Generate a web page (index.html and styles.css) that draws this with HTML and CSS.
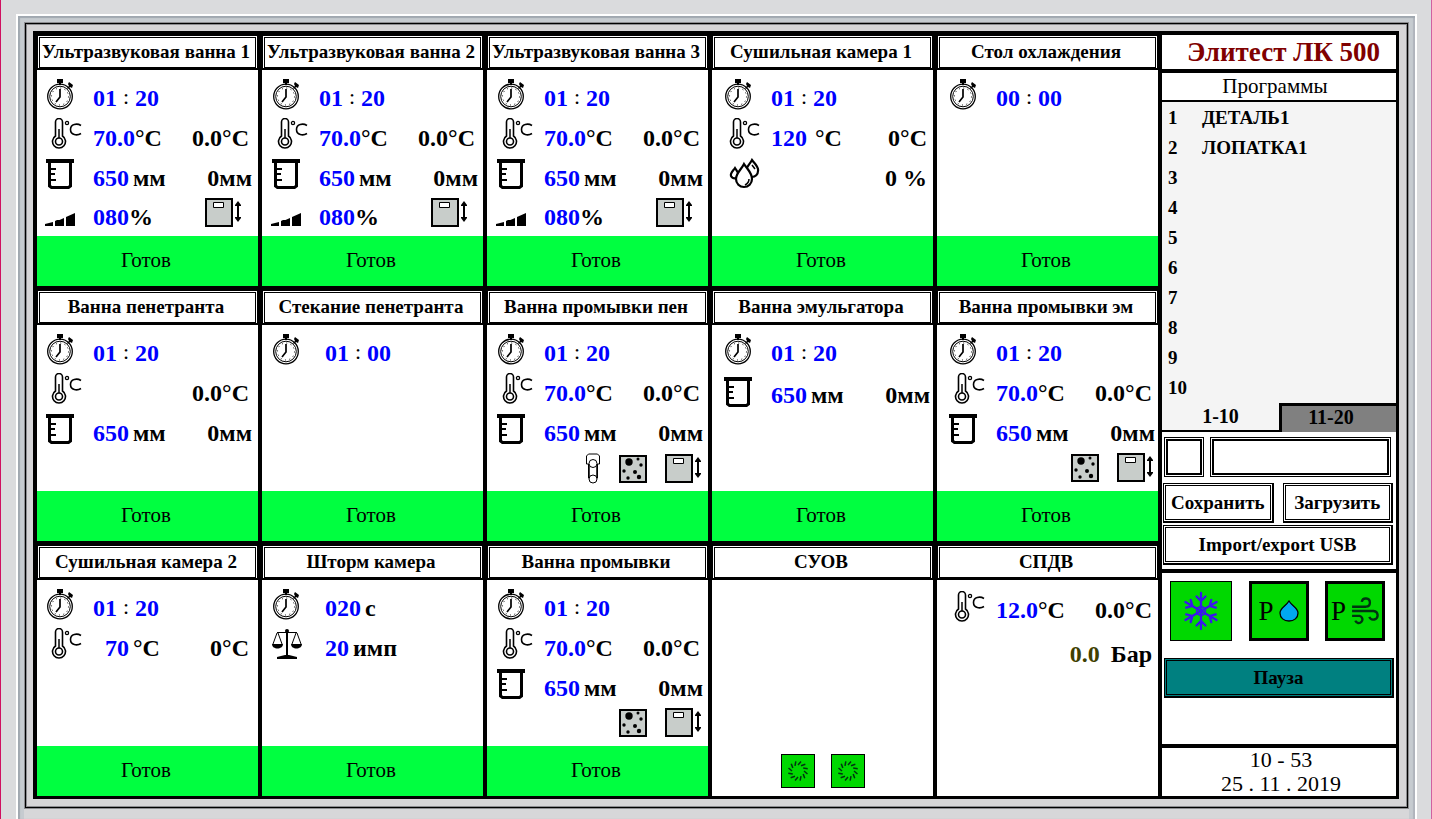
FILE: index.html
```html
<!DOCTYPE html>
<html lang="ru">
<head>
    <meta charset="UTF-8">
    <meta name="viewport" content="width=device-width, initial-scale=1.0">
    <title>Элитест ЛК 500</title>
    <link rel="stylesheet" href="styles.css">
</head>
<body>

<!-- icons -->
<svg class="sprite" aria-hidden="true">
    <symbol id="clock" viewBox="0 0 40 34">
        <circle cx="15" cy="18.500" r="12.300" fill="#fff" stroke="#000" stroke-width="1.300"/>
        <circle cx="15" cy="18.500" r="10.300" fill="none" stroke="#000"/>
        <circle cx="15" cy="18.500" r="8.500" fill="none" stroke="#000" stroke-dasharray="1 3.450"/>
        <path d="M12 1h6v4h-2v2h-2V5h-2zM23 6l1-2 4 3-1 3-2-1-2 2-1-1 2-2z" fill="#000"/>
        <path d="M15 11v8l-4 5" fill="none" stroke="#000" stroke-width="1.700"/>
    </symbol>
    <symbol id="thermo" viewBox="0 0 40 34">
        <path d="M10.500 18V4a3.500 3.500 0 0 1 7 0v14a6.500 6.500 0 1 1-7 0z" fill="#fff" stroke="#000" stroke-width="1.600"/>
        <circle cx="14" cy="23.500" r="3.500" fill="#fff" stroke="#000" stroke-width="1.600"/>
        <path d="M14 11v9" stroke="#000" stroke-width="1.500"/>
        <circle cx="22" cy="5" r="1.600" fill="none" stroke="#000" stroke-width="1.300"/>
        <path d="M36 7.500C32 5 25.500 6 25.500 11.500S32 18 36 15.500" fill="none" stroke="#000" stroke-width="1.600"/>
    </symbol>
    <symbol id="beaker" viewBox="0 0 40 34">
        <path d="M1 1h28v4H1z" fill="#000"/>
        <path d="M4.500 4v24l2 1.500h17l2-1.500V4" fill="none" stroke="#000" stroke-width="3"/>
        <path d="M5 11h6M5 16h5M5 22h6" stroke="#000" stroke-width="2"/>
    </symbol>
    <symbol id="power" viewBox="0 0 40 34">
        <path d="M0 28v-2l8-2v4zM10 28v-5l2-1h6v6zM10 24l9-4v8h-9zM21 28v-9l9-4v13z" fill="#000"/>
    </symbol>
    <symbol id="drops" viewBox="0 0 40 34">
        <g fill="#fff" stroke="#000" stroke-width="2.200">
            <path d="M29 2c3 4 7 7 6 11a6 6 0 0 1-12 0c0-4 4-7 6-11z"/>
            <path d="M12 10c2 3 4 5 4 8a4.500 4.500 0 0 1-8 0c-1-3 2-5 4-8z"/>
            <path d="M21 6c4 6 8 9 8 15a8 8 0 0 1-16 0c0-6 5-9 8-15z"/>
        </g>
        <path d="M26 21c0 3-2 5-4 6M29 7l3 4" fill="none" stroke="#000" stroke-width="1.500"/>
    </symbol>
    <symbol id="scales" viewBox="0 0 40 34">
        <path d="M15 3h2v25h-2z"/>
        <circle cx="16" cy="3" r="2"/>
        <path d="M6 4.500h20M6 5L2 16M7 5l4 11M25 5l-4 11M26 5l4 11" fill="none" stroke="#000"/>
        <path d="M1 16h11c0 6-11 6-11 0zM20 16h11c0 6-11 6-11 0zM6 31v-2l8-2h4l8 2v2z"/>
    </symbol>
    <symbol id="lid" viewBox="0 0 38 30">
        <path d="M1 1h26v27H1z" fill="#c8cdca" stroke="#000" stroke-width="2"/>
        <path d="M8.500 4.500h10v5h-10z" fill="#fff" stroke="#000"/>
        <path d="M30 7l3-4 3 4v1h-2v11h2v1l-3 4-3-4v-1h2V8h-2z"/>
    </symbol>
    <symbol id="bubbles" viewBox="0 0 28 30">
        <path d="M1 2h26v26H1z" fill="#c8cdca" stroke="#000" stroke-width="2"/>
        <circle cx="10" cy="8" r="3.700"/>
        <circle cx="19" cy="5" r="1.500"/><circle cx="22" cy="11" r="1.700"/>
        <circle cx="5" cy="17" r="1.700"/><circle cx="16" cy="18" r="2"/>
        <circle cx="9" cy="24" r="1.700"/><circle cx="20" cy="23" r="2.200"/>
    </symbol>
    <symbol id="valve" viewBox="0 0 16 32">
        <path d="M1.500 11V3l2-2h9l2 2v8h-2v14h-9V11z" fill="#fff" stroke="#000"/>
        <path d="M4 11v13M12 11v13" stroke="#000" stroke-width="1.500"/>
        <circle cx="8" cy="10.500" r="4" fill="#fff" stroke="#000"/>
        <circle cx="8" cy="26" r="4" fill="#fff" stroke="#000"/>
    </symbol>
    <symbol id="fan" viewBox="0 0 32 32">
        <g stroke="#031" stroke-width="1.500" fill="none">
            <path d="M16 10l3-3.500M16 22l-3 3.500M10 16l-3.500-3M22 16l3.500 3"/>
            <path d="M16 10l3-3.500M16 22l-3 3.500M10 16l-3.500-3M22 16l3.500 3" transform="rotate(30 16 16)"/>
            <path d="M16 10l3-3.500M16 22l-3 3.500M10 16l-3.500-3M22 16l3.500 3" transform="rotate(60 16 16)"/>
        </g>
    </symbol>
    <symbol id="snow" viewBox="0 0 40 40">
        <g fill="none" stroke="#3a14ee" stroke-width="2.300" stroke-linecap="round">
            <path id="ray" d="M20 20V2M15.500 5.500L20 10l4.500-4.500"/>
            <use href="#ray" transform="rotate(60 20 20)"/>
            <use href="#ray" transform="rotate(120 20 20)"/>
            <use href="#ray" transform="rotate(180 20 20)"/>
            <use href="#ray" transform="rotate(240 20 20)"/>
            <use href="#ray" transform="rotate(300 20 20)"/>
            <path d="M20 15l4.300 2.500v5L20 25l-4.300-2.500v-5z" stroke-width="1.500"/>
        </g>
    </symbol>
    <symbol id="drop" viewBox="0 0 20 22">
        <path d="M10 1c3 5 9 7 9 12 0 5-4 8-9 8s-9-3-9-8C1 8 7 6 10 1z" fill="#00a8f0" stroke="#000" stroke-width="1.300"/>
    </symbol>
    <symbol id="wind" viewBox="0 0 26 26">
        <path d="M1 9h13a3.800 3.800 0 1 0-4-4.500M1 13h20a4 4 0 1 1-4 5.500M1 17.500h7a3.400 3.400 0 1 1-4 4.500" fill="none" stroke="#031" stroke-width="2.200"/>
    </symbol>
</svg>

<div class="device">
<div class="bezel">
<div class="rim">
<div class="panel">

    <main class="stations">
        <section class="station">
            <h2>Ультразвуковая ванна 1</h2>
            <div class="readings">
                <div class="row"><svg class="icon"><use href="#clock"/></svg><b class="set">01</b><i class="colon">:</i><b class="set">20</b></div>
                <div class="row"><svg class="icon"><use href="#thermo"/></svg><b class="set">70.0</b><b>°C</b><b class="actual temp">0.0°C</b></div>
                <div class="row"><svg class="icon"><use href="#beaker"/></svg><b class="set">650</b><b class="unit">мм</b><b class="actual">0мм</b></div>
                <div class="row last"><svg class="icon"><use href="#power"/></svg><b class="set">080</b><b>%</b>
                    <div class="tools inset"><button aria-label="Крышка"><svg class="lid"><use href="#lid"/></svg></button></div>
                </div>
            </div>
            <div class="status">Готов</div>
        </section>

        <section class="station">
            <h2>Ультразвуковая ванна 2</h2>
            <div class="readings">
                <div class="row"><svg class="icon"><use href="#clock"/></svg><b class="set">01</b><i class="colon">:</i><b class="set">20</b></div>
                <div class="row"><svg class="icon"><use href="#thermo"/></svg><b class="set">70.0</b><b>°C</b><b class="actual temp">0.0°C</b></div>
                <div class="row"><svg class="icon"><use href="#beaker"/></svg><b class="set">650</b><b class="unit">мм</b><b class="actual">0мм</b></div>
                <div class="row last"><svg class="icon"><use href="#power"/></svg><b class="set">080</b><b>%</b>
                    <div class="tools inset"><button aria-label="Крышка"><svg class="lid"><use href="#lid"/></svg></button></div>
                </div>
            </div>
            <div class="status">Готов</div>
        </section>

        <section class="station">
            <h2>Ультразвуковая ванна 3</h2>
            <div class="readings">
                <div class="row"><svg class="icon"><use href="#clock"/></svg><b class="set">01</b><i class="colon">:</i><b class="set">20</b></div>
                <div class="row"><svg class="icon"><use href="#thermo"/></svg><b class="set">70.0</b><b>°C</b><b class="actual temp">0.0°C</b></div>
                <div class="row"><svg class="icon"><use href="#beaker"/></svg><b class="set">650</b><b class="unit">мм</b><b class="actual">0мм</b></div>
                <div class="row last"><svg class="icon"><use href="#power"/></svg><b class="set">080</b><b>%</b>
                    <div class="tools inset"><button aria-label="Крышка"><svg class="lid"><use href="#lid"/></svg></button></div>
                </div>
            </div>
            <div class="status">Готов</div>
        </section>

        <section class="station">
            <h2>Сушильная камера 1</h2>
            <div class="readings">
                <div class="row"><svg class="icon"><use href="#clock"/></svg><b class="set">01</b><i class="colon">:</i><b class="set">20</b></div>
                <div class="row"><svg class="icon"><use href="#thermo"/></svg><b class="set">120</b><b class="unit far">°C</b><b class="actual temp">0°C</b></div>
                <div class="row"><svg class="icon"><use href="#drops"/></svg><b class="actual temp">0 %</b></div>
            </div>
            <div class="status">Готов</div>
        </section>

        <section class="station">
            <h2>Стол охлаждения</h2>
            <div class="readings">
                <div class="row"><svg class="icon"><use href="#clock"/></svg><b class="set">00</b><i class="colon">:</i><b class="set">00</b></div>
            </div>
            <div class="status">Готов</div>
        </section>

        <section class="station">
            <h2>Ванна пенетранта</h2>
            <div class="readings">
                <div class="row"><svg class="icon"><use href="#clock"/></svg><b class="set">01</b><i class="colon">:</i><b class="set">20</b></div>
                <div class="row"><svg class="icon"><use href="#thermo"/></svg><b class="actual temp">0.0°C</b></div>
                <div class="row"><svg class="icon"><use href="#beaker"/></svg><b class="set">650</b><b class="unit">мм</b><b class="actual">0мм</b></div>
            </div>
            <div class="status">Готов</div>
        </section>

        <section class="station">
            <h2>Стекание пенетранта</h2>
            <div class="readings">
                <div class="row indent"><svg class="icon"><use href="#clock"/></svg><b class="set">01</b><i class="colon">:</i><b class="set">00</b></div>
            </div>
            <div class="status">Готов</div>
        </section>

        <section class="station">
            <h2>Ванна промывки пен</h2>
            <div class="readings">
                <div class="row"><svg class="icon"><use href="#clock"/></svg><b class="set">01</b><i class="colon">:</i><b class="set">20</b></div>
                <div class="row"><svg class="icon"><use href="#thermo"/></svg><b class="set">70.0</b><b>°C</b><b class="actual temp">0.0°C</b></div>
                <div class="row"><svg class="icon"><use href="#beaker"/></svg><b class="set">650</b><b class="unit">мм</b><b class="actual">0мм</b></div>
                <div class="row last">
                    <div class="tools">
                        <button aria-label="Клапан"><svg class="valve"><use href="#valve"/></svg></button>
                        <button aria-label="Барботаж"><svg class="bubbles"><use href="#bubbles"/></svg></button>
                        <button aria-label="Крышка"><svg class="lid"><use href="#lid"/></svg></button>
                    </div>
                </div>
            </div>
            <div class="status">Готов</div>
        </section>

        <section class="station">
            <h2>Ванна эмульгатора</h2>
            <div class="readings">
                <div class="row"><svg class="icon"><use href="#clock"/></svg><b class="set">01</b><i class="colon">:</i><b class="set">20</b></div>
                <div class="row tall"><svg class="icon"><use href="#beaker"/></svg><b class="set">650</b><b class="unit">мм</b><b class="actual">0мм</b></div>
            </div>
            <div class="status">Готов</div>
        </section>

        <section class="station">
            <h2>Ванна промывки эм</h2>
            <div class="readings">
                <div class="row"><svg class="icon"><use href="#clock"/></svg><b class="set">01</b><i class="colon">:</i><b class="set">20</b></div>
                <div class="row"><svg class="icon"><use href="#thermo"/></svg><b class="set">70.0</b><b>°C</b><b class="actual temp">0.0°C</b></div>
                <div class="row"><svg class="icon"><use href="#beaker"/></svg><b class="set">650</b><b class="unit">мм</b><b class="actual">0мм</b></div>
                <div class="row last">
                    <div class="tools">
                        <button aria-label="Барботаж"><svg class="bubbles"><use href="#bubbles"/></svg></button>
                        <button aria-label="Крышка"><svg class="lid"><use href="#lid"/></svg></button>
                    </div>
                </div>
            </div>
            <div class="status">Готов</div>
        </section>

        <section class="station">
            <h2>Сушильная камера 2</h2>
            <div class="readings">
                <div class="row"><svg class="icon"><use href="#clock"/></svg><b class="set">01</b><i class="colon">:</i><b class="set">20</b></div>
                <div class="row"><svg class="icon"><use href="#thermo"/></svg><b class="set short">70</b><b class="unit">°C</b><b class="actual temp">0°C</b></div>
            </div>
            <div class="status">Готов</div>
        </section>

        <section class="station">
            <h2>Шторм камера</h2>
            <div class="readings">
                <div class="row indent"><svg class="icon"><use href="#clock"/></svg><b class="set">020</b><b class="unit">с</b></div>
                <div class="row indent"><svg class="icon"><use href="#scales"/></svg><b class="set">20</b><b class="unit">имп</b></div>
            </div>
            <div class="status">Готов</div>
        </section>

        <section class="station">
            <h2>Ванна промывки</h2>
            <div class="readings">
                <div class="row"><svg class="icon"><use href="#clock"/></svg><b class="set">01</b><i class="colon">:</i><b class="set">20</b></div>
                <div class="row"><svg class="icon"><use href="#thermo"/></svg><b class="set">70.0</b><b>°C</b><b class="actual temp">0.0°C</b></div>
                <div class="row"><svg class="icon"><use href="#beaker"/></svg><b class="set">650</b><b class="unit">мм</b><b class="actual">0мм</b></div>
                <div class="row last">
                    <div class="tools">
                        <button aria-label="Барботаж"><svg class="bubbles"><use href="#bubbles"/></svg></button>
                        <button aria-label="Крышка"><svg class="lid"><use href="#lid"/></svg></button>
                    </div>
                </div>
            </div>
            <div class="status">Готов</div>
        </section>

        <section class="station">
            <h2>СУОВ</h2>
            <div class="fans">
                <button class="fan" aria-label="Вентилятор 1"><svg><use href="#fan"/></svg></button>
                <button class="fan" aria-label="Вентилятор 2"><svg><use href="#fan"/></svg></button>
            </div>
        </section>

        <section class="station">
            <h2>СПДВ</h2>
            <div class="readings">
                <div class="row tall"><svg class="icon"><use href="#thermo"/></svg><b class="set">12.0</b><b>°C</b><b class="actual temp">0.0°C</b></div>
                <div class="row tall"><b class="actual temp"><span class="pressure">0.0</span>Бар</b></div>
            </div>
        </section>
    </main>

    <aside class="side">
        <h1>Элитест ЛК 500</h1>
        <h3>Программы</h3>
        <div class="programs">
            <ol>
                <li><b>1</b>ДЕТАЛЬ1</li>
                <li><b>2</b>ЛОПАТКА1</li>
                <li><b>3</b></li>
                <li><b>4</b></li>
                <li><b>5</b></li>
                <li><b>6</b></li>
                <li><b>7</b></li>
                <li><b>8</b></li>
                <li><b>9</b></li>
                <li><b>10</b></li>
            </ol>
            <div class="tabs">
                <button class="tab active">1-10</button>
                <button class="tab">11-20</button>
            </div>
        </div>

        <form class="controls">
            <div class="fields">
                <input class="field number" type="text" aria-label="Номер программы">
                <input class="field" type="text" aria-label="Название программы">
            </div>
            <div class="buttons">
                <button type="button" class="btn">Сохранить</button>
                <button type="button" class="btn">Загрузить</button>
            </div>
            <button type="button" class="btn">Import/export USB</button>
        </form>

        <div class="actions">
            <div class="tiles">
                <button class="tile cold" aria-label="Охлаждение"><svg class="snow"><use href="#snow"/></svg></button>
                <button class="tile">P<svg class="drop"><use href="#drop"/></svg></button>
                <button class="tile">P<svg class="wind"><use href="#wind"/></svg></button>
            </div>
            <button class="btn pause">Пауза</button>
        </div>

        <div class="datetime">
            <time>10 - 53</time>
            <time>25 . 11 . 2019</time>
        </div>
    </aside>

</div>
</div>
</div>
</div>

</body>
</html>
```

FILE: styles.css
```css
* {
    box-sizing: border-box;
}

body {
    margin: 0;
    font-family: "Liberation Serif", "Times New Roman", serif;
    color: #000;
}

h1, h2, h3, ol {
    margin: 0;
    padding: 0;
}

button, input {
    font-family: inherit;
    color: inherit;
    margin: 0;
    padding: 0;
}

button {
    cursor: pointer;
}

svg {
    display: block;
}

.sprite {
    position: absolute;
    width: 0;
    height: 0;
}

/* device frame */
.device {
    display: flex;
    min-height: 100vh;
    padding: 14px 14px 0 15px;
    background: #dadbdd;
    border-left: 1px solid #d01060;
    border-right: 1px solid #d060a0;
}

.bezel {
    display: flex;
    flex: 1;
    padding: 7px 7px 11px;
    border: 2px solid #fff;
    border-bottom: none;
    background: #d7d7d9;
    box-shadow: inset 2px 2px 1px #a0a8b0, inset -2px 0 1px #b0b4bc,
        inset 6px 0 #c6cbd0, inset -6px 0 #c6cbd0, inset 0 6px #c6cbd0;
}

.rim {
    display: flex;
    flex: 1;
    padding: 7px 8px 8px 7px;
    border: 1px solid #000;
    background: #d6d5d7;
    box-shadow: 0 0 0 1px #8c8c90, inset 0 0 0 1px #8c8c90;
}

.panel {
    display: flex;
    flex: 1;
    gap: 4px;
    border: 4px solid #000;
    border-width: 4px 3px 3px 4px;
    background: #000;
}

/* stations */
.stations {
    flex: 1;
    display: grid;
    grid-template-columns: repeat(5, minmax(0, 1fr));
    grid-auto-rows: 1fr;
    gap: 4px;
}

.station {
    --shift: 0px;
    display: flex;
    flex-direction: column;
    background: #fff;
}

.station:nth-child(5n+2),
.station:nth-child(5n+3) {
    --shift: 1px;
}

.station:nth-child(5n+4),
.station:nth-child(5n+5) {
    --shift: 3px;
}

.station h2 {
    border: 1px solid #000;
    border-bottom-width: 2px;
    outline: 1px solid #000;
    outline-offset: -3px;
    box-shadow: inset 0 0 0 1px #fff;
    height: 35px;
    padding-right: 3px;
    line-height: 32px;
    font-size: 19px;
    text-align: center;
    white-space: nowrap;
}

.readings {
    flex: 1;
    padding: 8px calc(6px - var(--shift)) 0 calc(8px + var(--shift));
}

.row {
    display: flex;
    align-items: center;
    height: 40px;
    font-size: 24px;
}

.row.last {
    height: 38px;
}

.row.tall {
    height: 44px;
}

.icon {
    align-self: flex-start;
    width: 40px;
    height: 34px;
    margin-right: 8px;
}

.row.indent .icon {
    margin-right: 14px;
}

.row.tall .icon {
    margin-top: 3px;
}

.set {
    color: #0000ff;
}

.set.short {
    padding-left: 12px;
}

.colon {
    width: 18px;
    padding-bottom: 2px;
    font-style: normal;
    font-size: 22px;
    text-align: center;
}

.unit {
    margin-left: 4px;
}

.unit.far {
    margin-left: 8px;
}

.actual {
    margin-left: auto;
}

.actual.temp {
    padding-right: 3px;
}

.pressure {
    margin-right: 11px;
    color: #404000;
}

.tools {
    display: flex;
    align-self: flex-start;
    gap: 18px;
    margin-left: auto;
}

.tools.inset {
    padding-right: 9px;
}

.tools button {
    border: none;
    background: none;
}

.lid {
    width: 38px;
    height: 30px;
}

.bubbles {
    width: 28px;
    height: 30px;
}

.valve {
    width: 16px;
    height: 32px;
}

.status {
    height: 50px;
    padding-right: 3px;
    line-height: 48px;
    background: #00ff40;
    font-size: 21px;
    text-align: center;
}

.fans {
    flex: 1;
    display: flex;
    justify-content: center;
    align-items: flex-end;
    gap: 16px;
    padding-bottom: 8px;
}

.fan {
    width: 34px;
    height: 34px;
    border: 1px solid #000;
    background: #00d800;
}

.fan svg {
    width: 32px;
    height: 32px;
}

/* side column */
.side {
    display: flex;
    flex-direction: column;
    width: 234px;
    background: #fff;
}

.side h1 {
    height: 38px;
    line-height: 34px;
    padding-left: 9px;
    border-bottom: 4px solid #000;
    color: #800000;
    font-size: 27px;
    text-align: center;
    white-space: nowrap;
}

.side h3 {
    height: 29px;
    line-height: 27px;
    padding-right: 8px;
    border-bottom: 2px solid #000;
    font-size: 21px;
    font-weight: normal;
    text-align: center;
}

.programs {
    background: #f4f4f4;
}

.programs ol {
    list-style: none;
    padding-top: 1px;
}

.programs li {
    display: flex;
    height: 30px;
    padding-left: 6px;
    line-height: 30px;
    font-size: 19px;
    font-weight: bold;
}

.programs li b {
    width: 34px;
}

.tabs {
    display: flex;
}

.tab {
    flex: 0 0 50%;
    height: 29px;
    border: none;
    border-bottom: 2px solid #000;
    background: #f4f4f4;
    padding-bottom: 2px;
    font-size: 20px;
    font-weight: bold;
    line-height: 22px;
}

.tab:not(.active) {
    border: solid #000;
    border-width: 3px 0 0 3px;
    background: #808080;
    padding: 0 16px 4px 0;
}

.controls {
    display: flex;
    flex-direction: column;
    gap: 2px;
    padding: 5px 3px 4px 1px;
    border-bottom: 4px solid #000;
}

.fields {
    display: flex;
    gap: 6px;
    padding: 0 2px 4px 1px;
}

.field {
    flex: 1;
    min-width: 0;
    height: 40px;
    padding: 0 6px;
    border: 1px solid #000;
    box-shadow: inset 0 0 0 1px #fff, inset 0 0 0 3px #000;
    font-size: 19px;
    background: #fff;
}

.field.number {
    flex: 0 0 40px;
}

.buttons {
    display: flex;
    gap: 9px;
}

.buttons .btn {
    flex: 1;
}

.btn {
    height: 40px;
    border: 1px solid #000;
    border-right-width: 2px;
    border-bottom-width: 2px;
    box-shadow: inset 0 0 0 1px #fff, inset 0 0 0 2px #000;
    background: #fff;
    font-size: 19px;
    font-weight: bold;
}

.actions {
    flex: 1;
    padding: 8px 2px;
    border-bottom: 4px solid #000;
}

.tiles {
    display: flex;
    justify-content: space-between;
    padding: 0 9px 0 6px;
}

.tile {
    display: flex;
    align-items: center;
    justify-content: center;
    gap: 5px;
    width: 60px;
    height: 60px;
    border: 3px solid #000;
    background: #00d800;
    font-size: 27px;
}

.tile.cold {
    width: 62px;
    border-width: 1px;
}

.snow {
    width: 40px;
    height: 40px;
}

.drop {
    width: 20px;
    height: 22px;
}

.wind {
    width: 28px;
    height: 28px;
}

.pause {
    width: 100%;
    margin-top: 17px;
    background: #008080;
    box-shadow: inset 0 0 0 1px #008080, inset 0 0 0 2px #000;
}

.datetime {
    display: flex;
    flex-direction: column;
    padding-left: 4px;
    font-size: 22px;
    line-height: 24px;
    text-align: center;
}
```
